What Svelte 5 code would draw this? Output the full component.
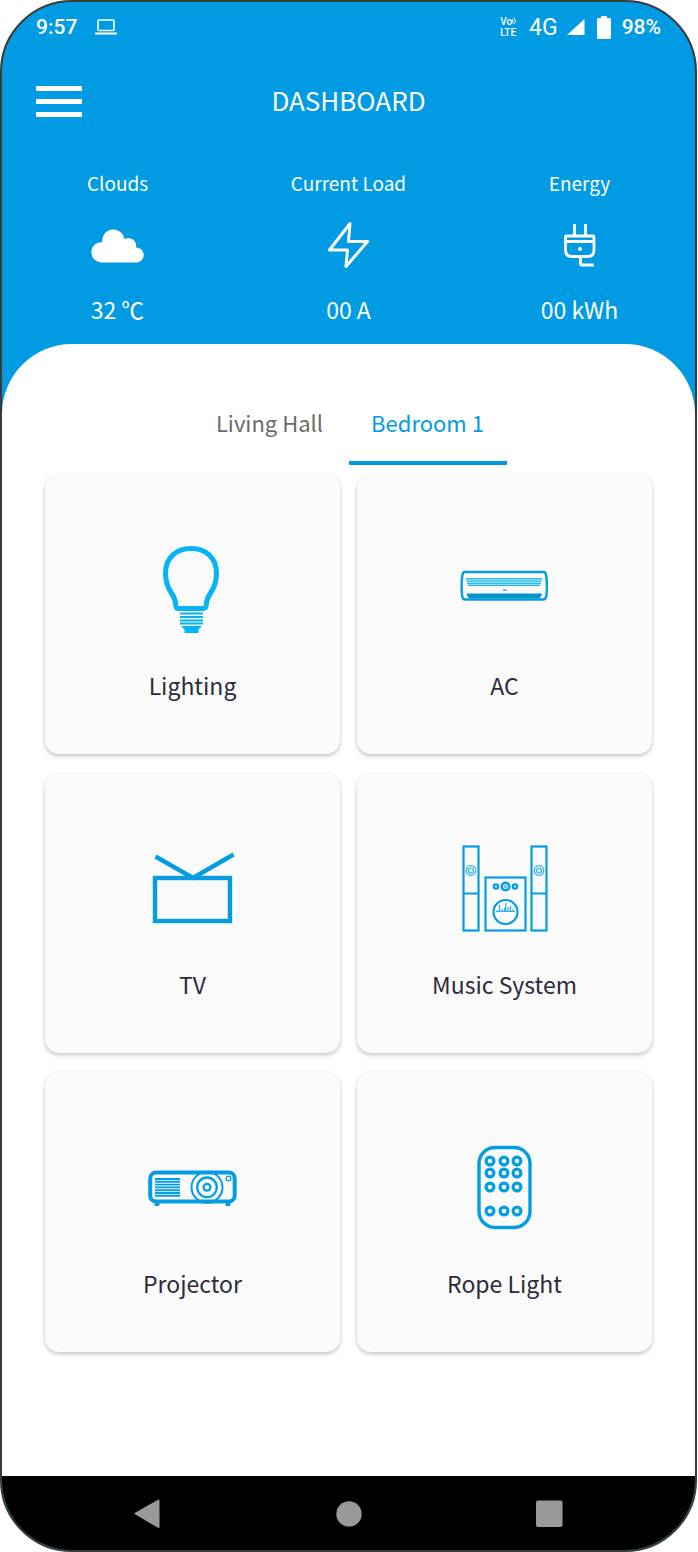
<script lang="ts">
  type Device = { id: string; name: string };

  let rooms = ['Living Hall', 'Bedroom 1'];
  let activeRoom = $state('Bedroom 1');

  let stats = [
    { id: 'clouds', label: 'Clouds', value: '32 ℃' },
    { id: 'load', label: 'Current Load', value: '00 A' },
    { id: 'energy', label: 'Energy', value: '00 kWh' }
  ];

  let devices: Device[] = [
    { id: 'lighting', name: 'Lighting' },
    { id: 'ac', name: 'AC' },
    { id: 'tv', name: 'TV' },
    { id: 'music', name: 'Music System' },
    { id: 'projector', name: 'Projector' },
    { id: 'rope', name: 'Rope Light' }
  ];

  // button centres on the remote
  const remoteX = [36, 50, 63];
  const remoteY = [23, 35, 49, 73];
</script>

<div class="phone">
  <div class="status">
    <div class="status-side">
      <span class="time">9:57</span>
      <svg width="22" height="16" viewBox="0 0 22 16">
        <rect x="3" y="1" width="16" height="10.500" rx="1" fill="none" stroke="#fff" stroke-width="1.6" />
        <path d="M0 13.500H22V15.500H0Z" fill="#fff" />
      </svg>
    </div>
    <div class="status-side">
      <span class="volte">
        <span class="volte-row">Vo<svg width="5" height="10" viewBox="0 0 6 10"><path d="M0 2.500Q2.500 5 0 8M2 .8Q6 5 2 9" fill="none" stroke="#fff" stroke-width="1.2" /></svg></span>
        <span class="volte-row">LTE</span>
      </span>
      <span class="network">4G</span>
      <svg class="signal" width="18" height="16" viewBox="0 0 18 16"><path d="M17.500 0V16H0Z" fill="#fff" /></svg>
      <svg class="battery" width="14" height="23" viewBox="0 0 14 23">
        <path d="M4 0H10V2H12.500Q14 2 14 3.500V21.500Q14 23 12.500 23H1.500Q0 23 0 21.500V3.500Q0 2 1.500 2H4Z" fill="#fff" />
      </svg>
      <span class="percent">98%</span>
    </div>
  </div>

  <header>
    <button class="menu" aria-label="Menu">
      <span></span>
      <span></span>
      <span></span>
    </button>
    <h1>DASHBOARD</h1>
  </header>

  <section class="stats">
    {#each stats as stat}
      <div class="stat">
        <span class="stat-label">{stat.label}</span>
        {#if stat.id === 'clouds'}
          <svg width="56" height="56" viewBox="0 0 56 56">
            <path d="M11 45A9.900 9.900 0 0 1 12.500 25.200A10.800 10.800 0 0 1 34.300 22.200A7.600 7.600 0 0 1 45.500 30.300A7.400 7.400 0 0 1 47 45Z" fill="#fff" transform="translate(-.5 -.5) scale(1.02)" />
          </svg>
        {:else if stat.id === 'load'}
          <svg width="56" height="56" viewBox="0 0 56 56">
            <path d="M29 6.500L8.500 33H26.500L25 49.500L46.500 24.500H27.500Z" fill="none" stroke="#fff" stroke-width="3" stroke-linejoin="round" />
          </svg>
        {:else}
          <svg width="56" height="56" viewBox="0 0 56 56">
            <g fill="none" stroke="#fff" stroke-width="2.800">
              <path d="M22.500 7V18M33.500 7V18M13.500 24.500H42" />
              <path d="M15 19H41Q42 19 42 20V33Q42 39.500 35.500 39.500H20Q13.500 39.500 13.500 33V20Q13.500 19 15 19Z" />
              <path d="M28.500 40V47Q28.500 48 29.500 48H42" />
            </g>
            <circle cx="28" cy="32" r="2" fill="#fff" />
          </svg>
        {/if}
        <span class="stat-value">{stat.value}</span>
      </div>
    {/each}
  </section>

  <main>
    <div class="tabs" role="tablist">
      {#each rooms as room}
        <button
          class="tab"
          class:active={room === activeRoom}
          role="tab"
          aria-selected={room === activeRoom}
          onclick={() => (activeRoom = room)}
        >
          {room}
        </button>
      {/each}
    </div>

    <div class="devices">
      {#each devices as device}
        <button class="card">
          <svg width="100" height="100" viewBox="1 0 100 100" fill="none" stroke="#049de2">
            {#if device.id === 'lighting'}
              <path
                d="M36 68.500Q34 68.500 33.800 65Q33.500 59 29.500 53Q23.500 44.500 23.500 33C23.500 18 34 8.500 49 8.500S74.500 18 74.500 33Q74.500 44.500 68.500 53Q64.500 59 64.200 65Q64 68.500 61 68.500Z"
                stroke="#04b4f4"
                stroke-width="5"
                stroke-linejoin="round"
              />
              <path d="M38 73.500H61M38 77H61M38 80.500H61M38 83.500H61" stroke="#04b4f4" stroke-width="2.200" />
              <path d="M39 86H60L56.500 89.500V93H42.500V89.500Z" fill="#04b4f4" stroke="none" />
            {:else if device.id === 'ac'}
              <path d="M11 32H89Q91.500 32 92 34.500Q93.500 43 92.500 55Q92 59.500 89 59.500H11Q8.500 59.500 8 55Q7 43 8.500 34.500Q9 32 11 32Z" stroke-width="2.400" />
              <path d="M12 38.700H88M12.500 41H87.500M13 43.300H87M14 45.300H86" stroke="#27bbe8" stroke-width="1.500" />
              <path d="M49 50H53" stroke="#27bbe8" stroke-width="1.500" />
              <path d="M12.500 53.500H88Q87 58 84.500 58.500H16Q13.500 58 12.500 53.500Z" fill="#0596cc" stroke="none" />
            {:else if device.id === 'tv'}
              <rect x="13" y="39" width="75" height="43" stroke-width="4.400" />
              <path d="M13.500 17.500L51 39L91.500 15.500" stroke-width="4.400" />
            {:else if device.id === 'music'}
              <g stroke-width="2.200">
                <rect x="9.500" y="7.500" width="15" height="84" />
                <path d="M9 54.500H25M77 54.500H93" />
                <rect x="77.500" y="7.500" width="15" height="84" />
                <rect x="31.500" y="38.500" width="40" height="53" />
                <circle cx="51.500" cy="73" r="12" />
              </g>
              <g stroke="#27b2e5" stroke-width="1.200">
                <circle cx="17" cy="31.500" r="4.800" />
                <circle cx="17" cy="31.500" r="2.500" />
                <circle cx="85" cy="31.500" r="4.800" />
                <circle cx="85" cy="31.500" r="2.500" />
                <path d="M42 72.500H61M43.500 71V73M45.500 66V73M48 70V73M50.500 69V73M51.800 64V73M54 68V73M56.500 67V73M59 70V73" />
              </g>
              <circle cx="42" cy="47.500" r="2.200" stroke-width="2.200" />
              <circle cx="61" cy="47.500" r="2.200" stroke-width="2.200" />
              <circle cx="51.500" cy="47.500" r="3.800" stroke-width="2.600" />
              <circle cx="51.500" cy="47.500" r="1.200" stroke-width="1" />
            {:else if device.id === 'projector'}
              <rect x="8.200" y="34.500" width="84.500" height="29" rx="6" stroke-width="4" />
              <path d="M13 65.500H17V67.500H13ZM84 65.500H88V67.500H84Z" fill="#049de2" stroke-width="1" />
              <path d="M13 41H38M13 43.800H38M13 46.600H38M13 49.400H38M13 52.200H38M13 55H38M13 57.800H38" stroke-width="1.900" />
              <circle cx="65" cy="49.300" r="15.500" stroke-width="2" />
              <circle cx="65" cy="49.300" r="9.800" stroke-width="2.300" />
              <circle cx="65" cy="49.300" r="3.400" stroke-width="2.300" />
              <circle cx="86.500" cy="40.500" r="2.400" stroke-width="1.300" />
            {:else}
              <rect x="25" y="9.500" width="51" height="80" rx="16" stroke-width="3.400" />
              {#each remoteY as y}
                {#each remoteX as x}
                  <circle cx={x} cy={y} r="3.900" stroke-width="3.200" />
                {/each}
              {/each}
            {/if}
          </svg>
          <span>{device.name}</span>
        </button>
      {/each}
    </div>
  </main>

  <nav>
    <button aria-label="Back">
      <svg width="28" height="30" viewBox="0 0 28 30"><path d="M2.500 15.500L25.500 2.500V29Z" fill="#999" stroke="#999" stroke-width="2" stroke-linejoin="round" /></svg>
    </button>
    <button aria-label="Home">
      <svg width="28" height="28" viewBox="0 0 28 28"><circle cx="14" cy="15" r="12.700" fill="#999" /></svg>
    </button>
    <button aria-label="Recent apps">
      <svg width="28" height="28" viewBox="0 0 28 28"><rect x="0" y="1.500" width="26.500" height="26.500" rx="2" fill="#999" /></svg>
    </button>
  </nav>
</div>

<style>
  :global(body) {
    background: #fff;
  }

  .phone {
    box-sizing: border-box;
    display: flex;
    flex-direction: column;
    min-height: 100vh;
    margin-right: 1px;
    overflow: hidden;
    border: 2px solid #3a3a3a;
    border-radius: 72px;
    background: #009be2;
    color: #fff;
    font-family: 'Noto Sans CJK SC', 'Noto Sans', sans-serif;
  }

  button {
    border: none;
    padding: 0;
    background: none;
    font-family: inherit;
    color: inherit;
    cursor: pointer;
  }

  svg {
    display: block;
  }

  .status {
    display: flex;
    justify-content: space-between;
    align-items: center;
    height: 50px;
    padding: 0 34px;
    font-family: Roboto, sans-serif;
    font-size: 21px;
    font-weight: 500;
  }

  .status-side {
    display: flex;
    align-items: center;
  }

  .time {
    margin-right: 18px;
  }

  .volte {
    display: flex;
    flex-direction: column;
    margin-right: 12px;
    font-size: 10px;
    line-height: 11px;
  }

  .volte-row {
    display: flex;
  }

  .network {
    font-size: 23px;
    font-weight: 400;
  }

  .signal {
    margin: 0 12px 0 9px;
  }

  .battery {
    margin-right: 11px;
  }

  header {
    display: grid;
    grid-template-columns: 1fr auto 1fr;
    align-items: center;
    height: 98px;
    padding: 0 34px;
  }

  .menu {
    display: flex;
    flex-direction: column;
    gap: 8px;
    width: 46px;
  }

  .menu span {
    height: 5px;
    background: #fff;
  }

  h1 {
    margin: 0;
    padding-bottom: 2px;
    font-size: 26px;
    font-weight: 400;
    line-height: 38px;
  }

  .stats {
    display: grid;
    grid-template-columns: repeat(3, 1fr);
    height: 194px;
  }

  .stat {
    display: flex;
    flex-direction: column;
    align-items: center;
    padding-top: 18px;
  }

  .stat-label {
    margin-bottom: 19px;
    font-size: 19px;
    line-height: 30px;
  }

  .stat-value {
    margin-top: 21px;
    font-size: 23px;
    line-height: 30px;
  }

  main {
    flex: 1;
    padding: 40px 43px;
    border-radius: 70px 70px 0 0;
    background: #fff;
  }

  .tabs {
    display: flex;
    justify-content: center;
    margin-bottom: 9px;
  }

  .tab {
    width: 158px;
    height: 81px;
    padding-bottom: 2px;
    border-bottom: 4px solid transparent;
    font-size: 22px;
    color: #6b6b6b;
  }

  .tab.active {
    border-bottom-color: #009be2;
    color: #009be2;
  }

  .devices {
    display: grid;
    grid-template-columns: 1fr 1fr;
    gap: 19px 17px;
  }

  .card {
    display: flex;
    flex-direction: column;
    align-items: center;
    height: 280px;
    padding-top: 66px;
    border-radius: 14px;
    background: #fafafa;
    box-shadow: 0 2px 4px rgba(0, 0, 0, 0.24);
    font-size: 23px;
    color: #2b2b3c;
  }

  .card span {
    margin-top: 29px;
    line-height: 32px;
  }

  nav {
    display: flex;
    justify-content: space-between;
    align-items: center;
    height: 74px;
    padding: 0 131px;
    background: #000;
  }
</style>
